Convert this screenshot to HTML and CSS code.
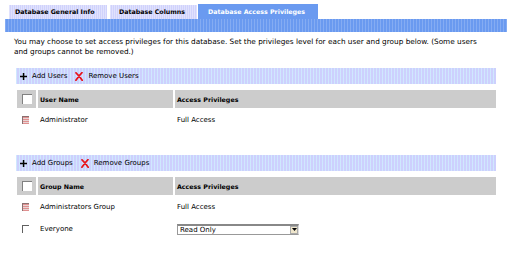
FILE: index.html
```html
<!DOCTYPE html>
<html lang="en">
<head>
    <meta charset="UTF-8">
    <title>Database Access Privileges</title>
    <link rel="stylesheet" href="styles.css">
</head>
<body>
    <div class="tabs">
        <div class="tab">Database General Info</div>
        <div class="tab">Database Columns</div>
        <div class="tab active">Database Access Privileges</div>
    </div>
    <div class="tab-bar"></div>

    <p class="intro">You may choose to set access privileges for this database. Set the privileges level for each user and group below. (Some users and groups cannot be removed.)</p>

    <div class="section">
        <div class="toolbar">
            <span class="tool"><svg class="ico" width="7" height="7" viewBox="0 0 7 7"><path d="M2.8 0h1.5v7H2.8zM0 2.8h7v1.5H0z" fill="#000"/></svg>Add Users</span>
            <span class="tool"><svg class="ico" width="8" height="9" viewBox="0 0 8 9"><path d="M1 0.8Q4 3.5 7.2 8.3M7 0.6Q4.5 3 0.9 8.2" stroke="#e8141c" stroke-width="1.7" fill="none" stroke-linecap="round"/></svg>Remove Users</span>
        </div>
        <div class="grid">
            <div class="head check"><span class="box"></span></div>
            <div class="head name">User Name</div>
            <div class="head access">Access Privileges</div>

            <div class="cell check"><span class="locked"></span></div>
            <div class="cell name">Administrator</div>
            <div class="cell access">Full Access</div>
        </div>
    </div>

    <div class="section second">
        <div class="toolbar">
            <span class="tool"><svg class="ico" width="7" height="7" viewBox="0 0 7 7"><path d="M2.8 0h1.5v7H2.8zM0 2.8h7v1.5H0z" fill="#000"/></svg>Add Groups</span>
            <span class="tool"><svg class="ico" width="8" height="9" viewBox="0 0 8 9"><path d="M1 0.8Q4 3.5 7.2 8.3M7 0.6Q4.5 3 0.9 8.2" stroke="#e8141c" stroke-width="1.7" fill="none" stroke-linecap="round"/></svg>Remove Groups</span>
        </div>
        <div class="grid">
            <div class="head check"><span class="box"></span></div>
            <div class="head name">Group Name</div>
            <div class="head access">Access Privileges</div>

            <div class="cell check"><span class="locked"></span></div>
            <div class="cell name">Administrators Group</div>
            <div class="cell access">Full Access</div>

            <div class="cell check"><span class="unchecked"></span></div>
            <div class="cell name">Everyone</div>
            <div class="cell access">
                <div class="select">
                    <span>Read Only</span>
                    <span class="arrow"><svg width="5" height="3" viewBox="0 0 5 3"><path d="M0 0h5L2.5 3z" fill="#000"/></svg></span>
                </div>
            </div>
        </div>
    </div>
</body>
</html>
```

FILE: styles.css
```css
* {
    margin: 0;
    padding: 0;
    box-sizing: border-box;
}

body {
    font-family: 'DejaVu Sans', Verdana, sans-serif;
    font-size: 7px;
    color: #000;
    background-color: #fff;
    width: 509px;
}

.tabs {
    display: flex;
    gap: 3px;
    padding: 4px 0 0 9px;
    height: 19px;
    align-items: flex-end;
}

.tab {
    height: 14px;
    padding: 0 0 0 6px;
    font-size: 6.3px;
    font-weight: bold;
    line-height: 14px;
    white-space: nowrap;
    background-color: #d0d2fc;
    background-image: repeating-linear-gradient(90deg, rgba(255, 255, 255, 0.35) 0 1px, transparent 1px 2px);
    color: #000;
}

.tab:nth-child(1) {
    width: 98px;
}

.tab:nth-child(2) {
    width: 87px;
    padding-left: 9px;
}

.tab.active {
    width: 120px;
    height: 15px;
    line-height: 15px;
    padding-left: 10px;
    margin-left: -2px;
    background: #6a9af0;
    color: #fff;
}

.tab-bar {
    height: 13px;
    margin: 0 2px 0 5px;
    background-color: #6a9af0;
    background-image: repeating-linear-gradient(90deg, rgba(255, 255, 255, 0.18) 0 1px, transparent 1px 3px);
}

.intro {
    margin: 5px 22px 0 14px;
    font-size: 7.3px;
    line-height: 10px;
}

.section {
    margin: 11px 13px 0 16px;
}

.section.second {
    margin-top: 25px;
}

.toolbar {
    height: 16px;
    display: flex;
    align-items: center;
    gap: 8px;
    padding-left: 4px;
    background-color: #cdd0fd;
    background-image: repeating-linear-gradient(90deg, rgba(210, 255, 255, 0.5) 0 1px, transparent 1px 3px);
}

.tool {
    display: flex;
    align-items: center;
    gap: 5px;
}

.grid {
    display: grid;
    grid-template-columns: 19px 135px 1fr;
    column-gap: 2px;
    margin: 6px 0 0 1px;
}

.head {
    height: 18px;
    background-color: #cccccc;
    font-size: 6.3px;
    font-weight: bold;
    display: flex;
    align-items: center;
    padding-left: 2px;
}

.cell {
    height: 22px;
    display: flex;
    align-items: center;
    padding: 2px 0 0 2px;
}

.check {
    padding-left: 5px;
}

.box {
    width: 10px;
    height: 10px;
    background: #fff;
    border-top: 1px solid #808080;
    border-left: 1px solid #808080;
}

.locked {
    width: 7px;
    height: 8px;
    border-top: 1px solid #8a7070;
    border-left: 1px solid #8a7070;
    background-color: #e8d4d4;
    background-image: repeating-linear-gradient(0deg, #e09090 0 1px, transparent 1px 2px);
}

.unchecked {
    width: 7px;
    height: 8px;
    border-top: 1px solid #606060;
    border-left: 1px solid #606060;
}

.select {
    width: 122px;
    height: 11px;
    display: flex;
    justify-content: space-between;
    align-items: center;
    border: 1px solid #999;
    border-top: 2px solid #888;
    border-right-color: #ddd;
    padding-left: 2px;
}

.arrow {
    width: 8px;
    height: 8px;
    display: flex;
    align-items: center;
    justify-content: center;
    background-color: #efe6cc;
    border: 1px solid #aaa;
}
```
